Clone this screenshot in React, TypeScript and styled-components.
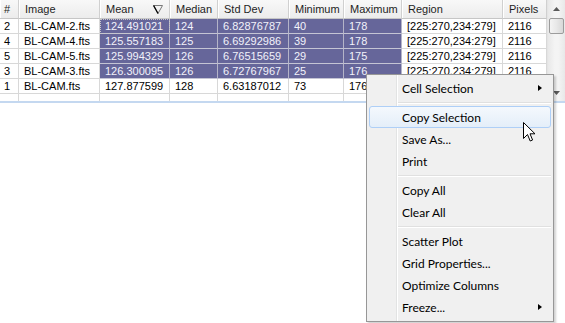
import React from "react";
import styled, { createGlobalStyle, css } from "styled-components";

const GlobalStyle = createGlobalStyle`
  html, body { margin: 0; padding: 0; background: #ffffff; }
  body { font-family: "Liberation Sans", Arial, sans-serif; }
`;

const Page = styled.div`
  position: relative;
  width: 565px;
  height: 323px;
  overflow: hidden;
  background: #ffffff;
`;

const GridFrame = styled.div`
  display: flex;
  height: 101px;
  border-bottom: 2px solid #c4d8f0;
  overflow: hidden;
`;

const Table = styled.div`
  display: grid;
  grid-template-columns: 19px 81px 70px 48px 71px 55px 58px 101px 44px;
  grid-auto-rows: 15px;
  grid-template-rows: 19px;
  width: 547px;
  font-size: 11px;
  color: #000;
`;

const HeadCell = styled.div`
  display: flex;
  align-items: center;
  justify-content: space-between;
  padding: 0 6px 0 ${(p: { $first?: boolean }) => (p.$first ? "4px" : "6px")};
  background: linear-gradient(#f8f8f8, #ececec);
  border-right: 1px solid #d0d0d0;
  border-bottom: 1px solid #c6c6c6;
  box-shadow: inset 1px 0 0 #ffffff;
  color: #1e1e1e;
  white-space: nowrap;
`;

const Cell = styled.div<{ $sel?: boolean; $focus?: boolean; $first?: boolean }>`
  display: flex;
  align-items: center;
  padding-left: ${(p) => (p.$first ? "4px" : "5px")};
  border-right: 1px solid #d8d8d8;
  border-bottom: 1px solid #d8d8d8;
  white-space: nowrap;
  overflow: hidden;
  line-height: 14px;
  ${(p) =>
    p.$sel &&
    css`
      background: #66669a;
      color: #f2f2fa;
      border-right-color: #b4b4c8;
      border-bottom-color: #c4c4d4;
    `}
  ${(p) =>
    p.$focus &&
    css`
      outline: 1px dotted #c8c8c8;
      outline-offset: -1px;
    `}
`;

const EmptyCell = styled.div`
  border-right: 1px solid #d8d8d8;
`;

const Scrollbar = styled.div`
  width: 18px;
  display: flex;
  flex-direction: column;
  background: linear-gradient(to right, #e8e8e8, #f4f4f4 40%, #f4f4f4 60%, #e8e8e8);
  border-left: 1px solid #e4e4e4;
  box-sizing: border-box;
`;

const ScrollButton = styled.div`
  height: 17px;
  display: flex;
  align-items: center;
  justify-content: center;
`;

const Thumb = styled.div`
  height: 14px;
  margin: 1px 1px 0 1px;
  border: 1px solid #9c9c9c;
  border-radius: 2px;
  background: linear-gradient(to right, #f4f4f4, #e8e8e8 50%, #d8d8d8);
`;

const Track = styled.div`
  flex: 1;
`;

const Menu = styled.div`
  position: absolute;
  left: 366px;
  top: 74px;
  width: 188px;
  box-sizing: border-box;
  border: 1px solid #979797;
  padding: 2px 2px 3px 2px;
  background: linear-gradient(
    to right,
    #f0f0f0 29px,
    #e2e3e3 29px,
    #e2e3e3 30px,
    #ffffff 30px,
    #ffffff 31px,
    #f0f0f0 31px
  );
  box-shadow: 2px 2px 2px rgba(0, 0, 0, 0.18);
  font-family: "Segoe UI", Lato, "Liberation Sans", sans-serif;
  font-size: 12px;
  color: #000;
`;

const Item = styled.div<{ $hot?: boolean }>`
  height: 22px;
  box-sizing: border-box;
  display: flex;
  align-items: center;
  padding-left: 32px;
  border: 1px solid transparent;
  border-radius: 3px;
  ${(p) =>
    p.$hot &&
    css`
      border-color: #aecff7;
      background: linear-gradient(#f4f8fd, #e4eef9);
    `}
`;

const SubArrow = styled.span`
  margin-left: auto;
  margin-right: 8px;
  width: 0;
  height: 0;
  border-top: 3.5px solid transparent;
  border-bottom: 3.5px solid transparent;
  border-left: 4px solid #000;
`;

const Separator = styled.div`
  height: 7px;
  margin-left: 29px;
  display: flex;
  align-items: center;
  &::after {
    content: "";
    flex: 1;
    border-top: 1px solid #e0e0e0;
    border-bottom: 1px solid #ffffff;
  }
`;

const Cursor = styled.svg`
  position: absolute;
  left: 523px;
  top: 122px;
`;

const headers = ["#", "Image", "Mean", "Median", "Std Dev", "Minimum", "Maximum", "Region", "Pixels"];

const rows: { cells: string[]; sel: boolean }[] = [
  { cells: ["2", "BL-CAM-2.fts", "124.491021", "124", "6.82876787", "40", "178", "[225:270,234:279]", "2116"], sel: true },
  { cells: ["4", "BL-CAM-4.fts", "125.557183", "125", "6.69292986", "39", "178", "[225:270,234:279]", "2116"], sel: true },
  { cells: ["5", "BL-CAM-5.fts", "125.994329", "126", "6.76515659", "29", "175", "[225:270,234:279]", "2116"], sel: true },
  { cells: ["3", "BL-CAM-3.fts", "126.300095", "126", "6.72767967", "25", "176", "[225:270,234:279]", "2116"], sel: true },
  { cells: ["1", "BL-CAM.fts", "127.877599", "128", "6.63187012", "73", "176", "[225:270,234:279]", "2116"], sel: false },
];

type MenuEntry = { label?: string; sub?: boolean; hot?: boolean; sep?: boolean };

const menu: MenuEntry[] = [
  { label: "Cell Selection", sub: true },
  { sep: true },
  { label: "Copy Selection", hot: true },
  { label: "Save As..." },
  { label: "Print" },
  { sep: true },
  { label: "Copy All" },
  { label: "Clear All" },
  { sep: true },
  { label: "Scatter Plot" },
  { label: "Grid Properties..." },
  { label: "Optimize Columns" },
  { label: "Freeze...", sub: true },
];

const FilterIcon = () => (
  <svg width="10" height="9" viewBox="0 0 10 9">
    <path d="M0.5 0.5 H9.5 L5 8.5 Z" fill="none" stroke="#7a7a7a" strokeWidth="1" />
    <path d="M0.6 0.5 L5 8.5" stroke="#000" strokeWidth="1.3" />
  </svg>
);

export default function App() {
  return (
    <Page>
      <GlobalStyle />
      <GridFrame>
        <Table>
          {headers.map((h, i) => (
            <HeadCell key={h} $first={i === 0}>
              <span>{h}</span>
              {h === "Mean" && <FilterIcon />}
            </HeadCell>
          ))}
          {rows.map((r, ri) =>
            r.cells.map((c, ci) => (
              <Cell
                key={`${ri}-${ci}`}
                $first={ci === 0}
                $sel={r.sel && ci >= 2 && ci <= 6}
                $focus={ri === 0 && ci === 2}
              >
                {c}
              </Cell>
            ))
          )}
          {headers.map((h) => (
            <EmptyCell key={`e-${h}`} />
          ))}
        </Table>
        <Scrollbar>
          <ScrollButton>
            <svg width="7" height="4" viewBox="0 0 7 4">
              <path d="M0 4 L3.5 0 L7 4 Z" fill="#5a5a5a" />
            </svg>
          </ScrollButton>
          <Thumb />
          <Track />
          <ScrollButton>
            <svg width="7" height="4" viewBox="0 0 7 4">
              <path d="M0 0 L3.5 4 L7 0 Z" fill="#5a5a5a" />
            </svg>
          </ScrollButton>
        </Scrollbar>
      </GridFrame>
      <Menu>
        {menu.map((m, i) =>
          m.sep ? (
            <Separator key={i} />
          ) : (
            <Item key={i} $hot={m.hot}>
              {m.label}
              {m.sub && <SubArrow />}
            </Item>
          )
        )}
      </Menu>
      <Cursor width="13" height="21" viewBox="0 0 13 21">
        <path
          d="M0.5 0.5 L0.5 16.5 L4.5 12.5 L7.2 19 L9.6 18 L7 11.8 L12 11.8 Z"
          fill="#ffffff"
          stroke="#000000"
          strokeWidth="1"
          strokeLinejoin="miter"
        />
      </Cursor>
    </Page>
  );
}
